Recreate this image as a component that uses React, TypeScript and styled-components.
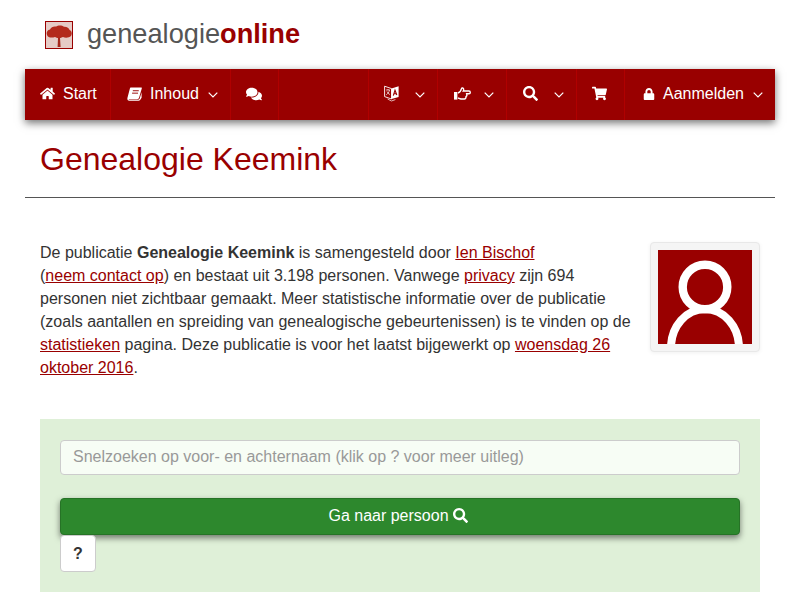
import styled, { createGlobalStyle } from "styled-components";
import { FaHome, FaComments, FaSearch, FaShoppingCart, FaLock } from "react-icons/fa";

const GlobalStyle = createGlobalStyle`
  html, body {
    margin: 0;
    padding: 0;
    background: #fff;
    overflow: hidden;
    height: 600px;
    font-family: "Liberation Sans", Arial, sans-serif;
    font-size: 16px;
    color: #333;
  }
`;

const Page = styled.div`
  width: 800px;
  height: 600px;
  overflow: hidden;
  box-sizing: border-box;
  padding: 0 25px;
`;

const Brand = styled.div`
  height: 69px;
  display: flex;
  align-items: center;
  gap: 14px;
  padding-left: 20px;
`;

const BrandName = styled.div`
  font-size: 27.2px;
  color: #555;
  margin-top: -2px;
  b {
    color: #990000;
  }
`;

const Navbar = styled.nav`
  display: flex;
  height: 51px;
  background: #990000;
  box-shadow: 0 3px 8px rgba(0, 0, 0, 0.55);
  color: #fff;
`;

const NavItem = styled.div<{ $w: number; $pad: number }>`
  flex: none;
  width: ${(p) => p.$w}px;
  box-sizing: border-box;
  display: flex;
  align-items: center;
  gap: 8px;
  padding: 0 12px 2px ${(p) => p.$pad}px;
  border-right: 1px solid #b00000;
  &:last-child {
    border-right: 0;
  }
  svg {
    flex: none;
  }
`;

const ChevronIcon = styled.svg`
  margin-left: auto;
  margin-top: 2px;
`;

const Title = styled.h1`
  margin: 0;
  height: 78px;
  box-sizing: border-box;
  padding: 21px 15px 0;
  font-size: 32px;
  line-height: 37px;
  font-weight: 400;
  color: #990000;
  border-bottom: 1px solid #555;
`;

const Intro = styled.section`
  display: flex;
  justify-content: space-between;
  align-items: flex-start;
  padding: 44px 15px 0;
`;

const Text = styled.p`
  margin: -1px 0 0;
  width: 600px;
  line-height: 23px;
  a {
    color: #990000;
  }
`;

const NoWrap = styled.span`
  white-space: nowrap;
`;

const Avatar = styled.div`
  width: 110px;
  height: 110px;
  box-sizing: border-box;
  padding: 7px;
  background: #f5f5f5;
  border: 1px solid #e8e8e8;
  border-radius: 4px;
  box-shadow: 0 1px 4px rgba(0, 0, 0, 0.06);
  svg {
    display: block;
  }
`;

const SearchPanel = styled.section`
  margin: 40px 15px 0;
  padding: 21px 20px 20px;
  height: 173px;
  box-sizing: border-box;
  background: #dff0d8;
`;

const SearchInput = styled.input`
  display: block;
  width: 100%;
  height: 35px;
  box-sizing: border-box;
  padding: 0 12px 2px;
  font: inherit;
  color: #333;
  background: #f7fdf5;
  border: 1px solid #ccc;
  border-radius: 4px;
  &::placeholder {
    color: #999;
    opacity: 1;
  }
`;

const GoButton = styled.button`
  display: flex;
  align-items: center;
  justify-content: center;
  gap: 4px;
  width: 100%;
  height: 37px;
  margin-top: 23px;
  padding: 0 4px 2px 0;
  font: inherit;
  color: #fff;
  background: #2d882d;
  border: 1px solid #267326;
  border-radius: 4px;
  box-shadow: 0 3px 6px rgba(0, 0, 0, 0.5);
`;

const HelpButton = styled.button`
  display: block;
  width: 36px;
  height: 37px;
  padding: 0;
  font: bold 16px "Liberation Sans", Arial, sans-serif;
  color: #333;
  background: #fff;
  border: 1px solid #ccc;
  border-radius: 4px;
`;

const Chevron = () => (
  <ChevronIcon width="10" height="6" viewBox="0 0 10 6">
    <path d="M0.7 0.7 L5 5 L9.3 0.7" fill="none" stroke="#fff" strokeWidth="1.2" />
  </ChevronIcon>
);

const BookIcon = () => (
  <svg width="15" height="14" viewBox="0 0 16 15">
    <path
      d="M4.2 0.6 H15.2 C15.8 0.6 15.9 1.1 15.8 1.6 L12.9 11.6 C12.6 12.6 12 13 11 13 H2.6 C1.8 13 1.6 13.5 2.1 13.6 H12 C12.7 13.6 13.3 13.2 13.6 12.4 L15.6 5.6 V11.6 L14.2 13.6 C13.7 14.4 13 14.8 12.2 14.8 H2.4 C0.9 14.8 0 13.4 0.4 11.8 L3 2 C3.2 1.2 3.6 0.6 4.2 0.6 Z"
      fill="#fff"
    />
    <path d="M6.2 4 H12.6 M5.4 6.6 H11.8" stroke="#990000" strokeWidth="1" fill="none" />
  </svg>
);

const TranslateIcon = () => (
  <svg width="15" height="17" viewBox="0 0 15 17">
    <path d="M0.6 1.2 L7.5 3.6 V14 L0.6 11.6 Z" fill="none" stroke="#fff" strokeWidth="0.9" />
    <path d="M7.5 3.4 L14.6 1.2 V12 L7.5 14 Z" fill="#fff" />
    <path d="M9.3 10.6 L11 5.2 L12.8 10 M10 8.8 H12.3" fill="none" stroke="#990000" strokeWidth="1.1" />
    <path d="M2 5 H6 M4 4 V5 M5.5 5 C5 7.5 3.6 9 2.2 9.8 M3 6.5 C3.6 8 4.6 9 6 9.6" fill="none" stroke="#fff" strokeWidth="0.7" />
    <path d="M3.6 14 L7.4 16 L11.4 14.6" fill="none" stroke="#fff" strokeWidth="0.7" />
  </svg>
);

const HandIcon = () => (
  <svg width="17" height="15" viewBox="0 0 17 15">
    <rect x="0" y="6" width="3.4" height="7.6" fill="#fff" />
    <path
      d="M4 7 C5.5 6.5 7 4.5 7.5 2.6 C7.8 1.6 9.6 1.8 9.7 3.4 C9.8 4.2 9.3 5 9.3 5 H15 C16.7 5 16.7 7.8 15 7.8 H12.7 C13.2 9.2 12.7 10.2 12 10.6 C12.2 11.8 11.4 13 10.4 13 H7 C5.6 13 5 12.2 4 12"
      fill="none"
      stroke="#fff"
      strokeWidth="1.4"
    />
  </svg>
);

const TreeLogo = () => (
  <svg width="28" height="28" viewBox="0 0 28 28">
    <rect x="0.5" y="0.5" width="27" height="27" fill="#e6cbc6" stroke="#990000" />
    <path d="M12.6 26 L13 17 L10 15 H15 H18 L15 17 L15.6 26 Z" fill="#a5281c" />
    <path
      d="M2 14 C1 11 3 9 5 8.6 C6 6 9 5 11 5.6 C13 4 17 4 19 5.8 C22 5.6 24 7.4 24.6 9 C27 10 27.4 13 26 15 C24 17 20 17 18 16 C15 17.4 12 17.4 10 16 C7 17 3 17 2 14 Z"
      fill="#b32a1c"
    />
  </svg>
);

export default function App() {
  return (
    <Page>
      <GlobalStyle />
      <Brand>
        <TreeLogo />
        <BrandName>
          genealogie<b>online</b>
        </BrandName>
      </Brand>

      <Navbar>
        <NavItem $w={86} $pad={15}>
          <FaHome size={15} />
          Start
        </NavItem>
        <NavItem $w={120} $pad={16}>
          <BookIcon />
          <span>Inhoud</span>
          <Chevron />
        </NavItem>
        <NavItem $w={48} $pad={15}>
          <FaComments size={16} />
        </NavItem>
        <NavItem $w={90} $pad={0} />
        <NavItem $w={69} $pad={15}>
          <TranslateIcon />
          <Chevron />
        </NavItem>
        <NavItem $w={69} $pad={16}>
          <HandIcon />
          <Chevron />
        </NavItem>
        <NavItem $w={70} $pad={16}>
          <FaSearch size={15} />
          <Chevron />
        </NavItem>
        <NavItem $w={48} $pad={15}>
          <FaShoppingCart size={15} />
        </NavItem>
        <NavItem $w={150} $pad={18}>
          <FaLock size={12} />
          <span>Aanmelden</span>
          <Chevron />
        </NavItem>
      </Navbar>

      <Title>Genealogie Keemink</Title>

      <Intro>
        <Text>
          De publicatie <b>Genealogie Keemink</b> is samengesteld door <a href="#">Ien Bischof</a>{" "}
          <NoWrap>
            (<a href="#">neem contact op</a>)
          </NoWrap>{" "}
          en bestaat uit 3.198 personen. Vanwege <a href="#">privacy</a> zijn 694 personen niet zichtbaar gemaakt. Meer
          statistische informatie over de publicatie (zoals aantallen en spreiding van genealogische gebeurtenissen) is
          te vinden op de <a href="#">statistieken</a> pagina. Deze publicatie is voor het laatst bijgewerkt op{" "}
          <a href="#">woensdag 26 oktober 2016</a>.
        </Text>
        <Avatar>
          <svg width="94" height="94" viewBox="0 0 94 94">
            <rect width="94" height="94" fill="#990000" />
            <circle cx="47" cy="37" r="22.3" fill="none" stroke="#fff" strokeWidth="8.4" />
            <path d="M13 98 A34 39 0 0 1 81 98" fill="none" stroke="#fff" strokeWidth="8" />
          </svg>
        </Avatar>
      </Intro>

      <SearchPanel>
        <SearchInput placeholder="Snelzoeken op voor- en achternaam (klik op ? voor meer uitleg)" />
        <GoButton>
          Ga naar persoon <FaSearch size={15} />
        </GoButton>
        <HelpButton>?</HelpButton>
      </SearchPanel>
    </Page>
  );
}
